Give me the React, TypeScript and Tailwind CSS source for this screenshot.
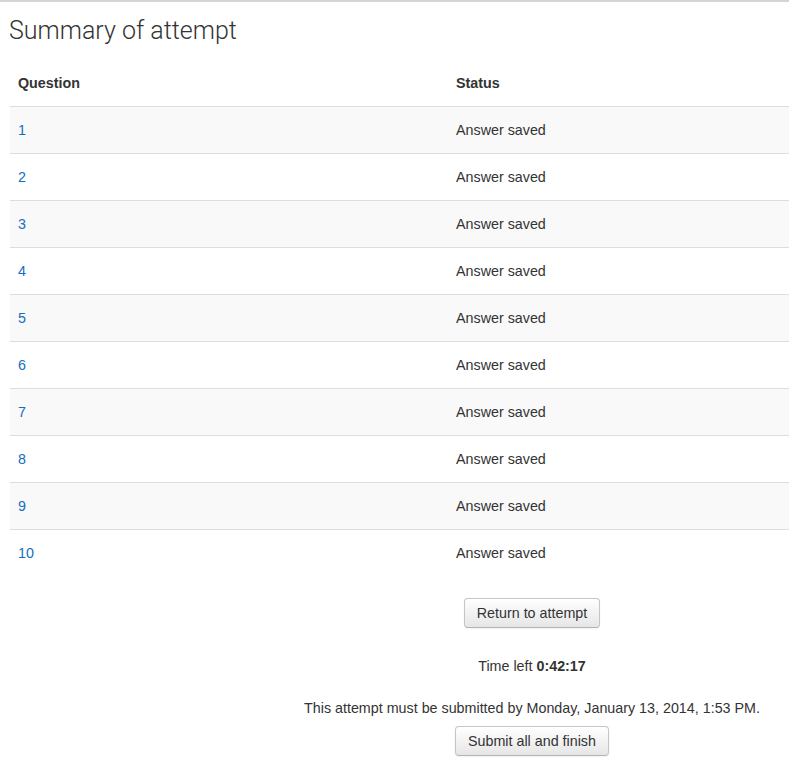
import React from 'react';

const rows = [1, 2, 3, 4, 5, 6, 7, 8, 9, 10];

const Btn: React.FC<{ label: string }> = ({ label }) => (
  <button className="h-[30px] px-[12px] text-[14.3px] text-[#333] rounded-[4px] border border-[#c5c5c5] border-b-[#b3b3b3] bg-gradient-to-b from-white to-[#e6e6e6] shadow-[inset_0_1px_0_rgba(255,255,255,0.2),0_1px_2px_rgba(0,0,0,0.05)]">
    {label}
  </button>
);

export default function App() {
  return (
    <div className="w-[789px] h-[759px] overflow-hidden bg-white text-[#333] font-['Liberation_Sans',Arial,sans-serif] text-[14.3px] leading-[20px]">
      <div className="border-t-2 border-[#d4d4d4]">
        <h2 className="pl-[9px] pt-[14px] h-[58px] font-['Roboto',sans-serif] font-light text-[25px] leading-[30px] text-[#333]">
          Summary of attempt
        </h2>
        <div className="ml-[10px] w-[1044px]">
          {/* Summary table */}
          <table className="w-full border-collapse">
            <thead>
              <tr>
                <th className="w-[446px] text-left font-bold pl-[8px] h-[46px]">Question</th>
                <th className="text-left font-bold h-[46px]">Status</th>
              </tr>
            </thead>
            <tbody>
              {rows.map((n, i) => (
                <tr key={n} className={`border-t border-[#ddd] ${i % 2 === 0 ? 'bg-[#f9f9f9]' : 'bg-white'}`}>
                  <td className="pl-[8px] h-[47px]">
                    <a className="text-[#146ec0]">{n}</a>
                  </td>
                  <td className="h-[47px]">Answer saved</td>
                </tr>
              ))}
            </tbody>
          </table>

          <div className="flex flex-col items-center text-center">
            <div className="mt-[22px]">
              <Btn label="Return to attempt" />
            </div>
            <div className="mt-[28px]">
              Time left <b>0:42:17</b>
            </div>
            <div className="mt-[22px]">
              This attempt must be submitted by Monday, January 13, 2014, 1:53 PM.
            </div>
            <div className="mt-[8px]">
              <Btn label="Submit all and finish" />
            </div>
          </div>
        </div>
      </div>
    </div>
  );
}
